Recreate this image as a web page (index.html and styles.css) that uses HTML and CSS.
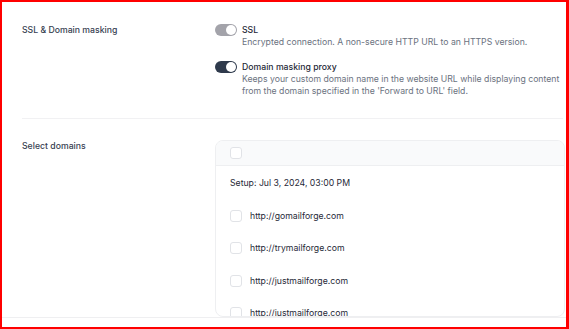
FILE: index.html
```html
<!DOCTYPE html>
<html>
<head>
<meta charset="utf-8">
<link rel="stylesheet" href="styles.css">
</head>
<body>
<div class="frame">
  <div class="main">
    <div class="row row-ssl">
      <div class="label">SSL &amp; Domain masking</div>
      <div class="options">
        <div class="option">
          <span class="toggle toggle-gray"><span class="knob"></span></span>
          <div class="option-text">
            <div class="option-title">SSL</div>
            <div class="option-desc">Encrypted connection. A non-secure HTTP URL to an HTTPS version.</div>
          </div>
        </div>
        <div class="option">
          <span class="toggle toggle-dark"><span class="knob"></span></span>
          <div class="option-text">
            <div class="option-title">Domain masking proxy</div>
            <div class="option-desc">Keeps your custom domain name in the website URL while displaying content from the domain specified in the 'Forward to URL' field.</div>
          </div>
        </div>
      </div>
    </div>
    <div class="divider"></div>
    <div class="row row-domains">
      <div class="label label-domains">Select domains</div>
      <div class="card">
        <div class="card-head"><span class="checkbox"></span></div>
        <div class="card-body">
          <div class="setup">Setup: Jul 3, 2024, 03:00 PM</div>
          <div class="item"><span class="checkbox"></span><span class="url">http://gomailforge.com</span></div>
          <div class="item"><span class="checkbox"></span><span class="url">http://trymailforge.com</span></div>
          <div class="item"><span class="checkbox"></span><span class="url">http://justmailforge.com</span></div>
          <div class="item"><span class="checkbox"></span><span class="url">http://justmailforge.com</span></div>
        </div>
      </div>
    </div>
  </div>
  <div class="footer"></div>
</div>
</body>
</html>
```
FILE: styles.css
```css
* { box-sizing: border-box; }
html, body { margin: 0; padding: 0; background: #fff; }
body {
  font-family: Inter, "Noto Sans", sans-serif;
  font-size: 8.7px;
  line-height: 12px;
  color: #1f2937;
}
.frame {
  width: 569px;
  height: 329px;
  border: 2px solid #ff0000;
  border-right-width: 3px;
  display: flex;
  flex-direction: column;
  overflow: hidden;
}
.main {
  height: 315px;
  overflow: hidden;
  padding: 0 1px 0 20px;
}
.row {
  display: grid;
  grid-template-columns: 193px 1fr;
}
.row-ssl { padding: 22px 0 21px; }
.label {
  font-weight: 500;
  color: #374151;
}
.options {
  display: flex;
  flex-direction: column;
  gap: 13px;
}
.option {
  display: flex;
  gap: 5px;
  align-items: flex-start;
}
.toggle {
  flex: none;
  width: 22px;
  height: 12px;
  margin-top: -0.5px;
  border-radius: 6px;
  display: flex;
  justify-content: flex-end;
  align-items: center;
  padding: 1px;
}
.toggle-gray { background: #a3a3aa; }
.toggle-dark { background: #2f3a4c; }
.knob {
  width: 10px;
  height: 10px;
  border-radius: 50%;
  background: #fff;
}
.option-title {
  font-weight: 500;
  color: #1f2937;
}
.option-desc {
  color: #6b7280;
}
.divider {
  height: 1px;
  background: #f1f1f3;
  margin-right: 2px;
}
.row-domains { padding-top: 21px; }
.label-domains { margin-top: 0; }
.card {
  height: 177px;
  border: 1px solid #eeeff1;
  border-radius: 8px;
  overflow: hidden;
}
.card-head {
  height: 25px;
  background: #f9fafb;
  border-bottom: 1px solid #eeeff1;
  padding: 6px 14px;
}
.checkbox {
  display: block;
  flex: none;
  width: 12px;
  height: 12px;
  border: 1px solid #e1e3e7;
  border-radius: 3px;
  background: #fff;
}
.card-body {
  padding: 11px 14px 0;
}
.setup {
  color: #1f2937;
}
.item {
  display: flex;
  align-items: center;
  gap: 8px;
  margin-top: 20.5px;
}
.url { color: #1f2937; }
.footer {
  flex: 1;
  border-top: 1px solid #efeff1;
}
```
